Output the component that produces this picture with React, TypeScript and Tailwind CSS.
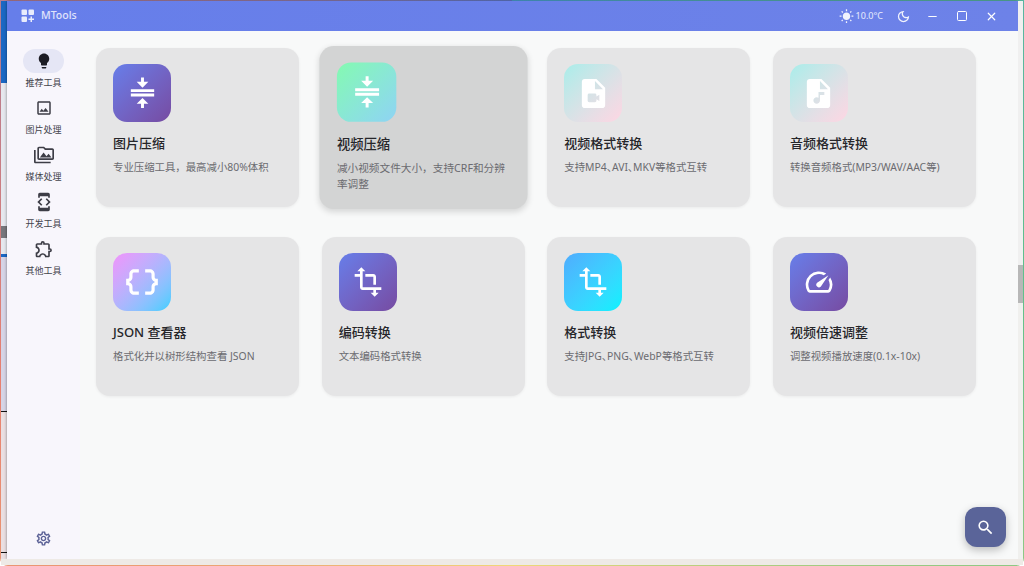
import React from "react";
import {
  MdAudioFile,
  MdCompress,
  MdDataObject,
  MdLightbulb,
  MdOutlineDarkMode,
  MdOutlineDeveloperMode,
  MdOutlineExtension,
  MdOutlineImage,
  MdOutlinePermMedia,
  MdOutlineSettings,
  MdSearch,
  MdSpeed,
  MdTransform,
  MdVideoFile,
  MdWbSunny,
} from "react-icons/md";
import { Minus, Square, X } from "lucide-react";

const navItems = [
  { label: "推荐工具", icon: MdLightbulb, active: true },
  { label: "图片处理", icon: MdOutlineImage },
  { label: "媒体处理", icon: MdOutlinePermMedia },
  { label: "开发工具", icon: MdOutlineDeveloperMode },
  { label: "其他工具", icon: MdOutlineExtension },
];

const purple = "bg-gradient-to-br from-[#667eea] to-[#764ba2]";
const pastel = "bg-gradient-to-br from-[#a8edea] to-[#fed6e3]";

const tools = [
  { title: "图片压缩", desc: "专业压缩工具，最高减小80%体积", icon: MdCompress, size: 35, bg: purple },
  {
    title: "视频压缩",
    desc: "减小视频文件大小，支持CRF和分辨率调整",
    icon: MdCompress,
    size: 35,
    bg: "bg-gradient-to-br from-[#84fab0] to-[#8fd3f4]",
    hovered: true,
  },
  { title: "视频格式转换", desc: "支持MP4、AVI、MKV等格式互转", icon: MdVideoFile, size: 35, bg: pastel, tight: true },
  { title: "音频格式转换", desc: "转换音频格式(MP3/WAV/AAC等)", icon: MdAudioFile, size: 35, bg: pastel },
  {
    title: "JSON 查看器",
    desc: "格式化并以树形结构查看 JSON",
    icon: MdDataObject,
    size: 38,
    bg: "bg-gradient-to-br from-[#f093fb] to-[#30cfff]",
  },
  { title: "编码转换", desc: "文本编码格式转换", icon: MdTransform, size: 32, bg: purple },
  {
    title: "格式转换",
    desc: "支持JPG、PNG、WebP等格式互转",
    icon: MdTransform,
    size: 32,
    bg: "bg-gradient-to-br from-[#4facfe] to-[#00f2fe]",
    tight: true,
  },
  { title: "视频倍速调整", desc: "调整视频播放速度(0.1x-10x)", icon: MdSpeed, size: 32, bg: purple },
];

const Logo = () => (
  <svg width="14" height="14" viewBox="0 0 14 14" fill="white" fillOpacity="0.85">
    <rect x="0.5" y="0.5" width="5.5" height="5.5" rx="1" />
    <rect x="7.5" y="0.5" width="5.5" height="5.5" rx="1" />
    <rect x="0.5" y="7.5" width="5.5" height="5.5" rx="1" />
    <path d="M9.5 7.5h1.5v2h2v1.5h-2v2H9.5v-2h-2V9.5h2z" />
  </svg>
);

const Titlebar = () => (
  <div className="flex h-[30px] shrink-0 items-center bg-gradient-to-r from-[#667eea] to-[#6d82e8] pl-[14px] text-white">
    <Logo />
    <span className="ml-[6px] text-[10.5px] font-medium text-white/80">MTools</span>
    <div className="ml-auto flex items-center">
      <MdWbSunny size={15} className="text-white/90" />
      <span className="ml-[2px] text-[9px] text-white/85">10.0°C</span>
      <MdOutlineDarkMode size={15} className="ml-[13px] text-white/90" />
      <Minus size={13} className="ml-[15px]" strokeWidth={1.8} />
      <Square size={12} className="ml-[17px]" strokeWidth={2} />
      <X size={13} className="ml-[17px] mr-[20px]" strokeWidth={2.2} />
    </div>
  </div>
);

const Sidebar = () => (
  <aside className="flex w-[73px] shrink-0 flex-col items-center bg-[#f8f6fc] pt-[18px] pb-[12px]">
    {navItems.map((item) => {
      const Icon = item.icon;
      return (
        <div key={item.label} className="flex h-[47px] w-full flex-col items-center">
          <div
            className={`flex h-[24px] w-[41px] items-center justify-center rounded-full ${
              item.active ? "bg-[#e5e6f5] text-[#1c1c24]" : "text-[#3d3d46]"
            }`}
          >
            <Icon size={item.active ? 18 : item.label === "图片处理" ? 18 : 20} />
          </div>
          <span className="mt-[4px] text-[9px] leading-[12px] text-[#44444c]">{item.label}</span>
        </div>
      );
    })}
    <MdOutlineSettings size={17} className="mt-auto text-[#5b6196]" />
  </aside>
);

const ToolCard = ({ tool }: { tool: (typeof tools)[number] }) => {
  const Icon = tool.icon;
  return (
    <div
      className={`h-[159px] rounded-[14px] px-[17px] pt-[16px] ${
        tool.hovered
          ? "scale-[1.025] bg-[#d3d4d4] shadow-[0_2px_6px_rgba(0,0,0,0.14)]"
          : "bg-[#e5e5e6] shadow-[0_1px_3px_rgba(0,0,0,0.06)]"
      }`}
    >
      <div className={`flex h-[58px] w-[58px] items-center justify-center rounded-[14px] text-white ${tool.bg}`}>
        <Icon size={tool.size} />
      </div>
      <div className="mt-[12px] text-[13px] leading-[18px] font-medium text-[#26262a]">{tool.title}</div>
      <div
        className={`mt-[7px] text-[10.4px] leading-[16px] text-[#6b6b70] ${
          tool.tight ? "[font-feature-settings:'palt']" : ""
        }`}
      >
        {tool.desc}
      </div>
    </div>
  );
};

export default function App() {
  return (
    <div className="h-[566px] w-[1024px] overflow-hidden bg-white font-['Noto_Sans','Noto_Sans_CJK_SC',sans-serif]">
      {/* screen edge glow, blue on top, green/yellow right, red bottom left */}
      <div className="h-full rounded-b-[8px] bg-[conic-gradient(#4a9fd0,#5fc08a_25%,#f0d878_50%,#e88070_72%,#6078c8)] p-[1px]">
        <div className="flex h-full flex-col rounded-b-[7px] bg-[#f2f2f4]">
          <div className="flex min-h-0 flex-1">
            {/* desktop peeking out on the left */}
            <div className="flex w-[6px] shrink-0 flex-col">
              <div className="h-[82px] bg-[#1b68c4]" />
              <div className="h-[143px] bg-[#e6e8ee]" />
              <div className="h-[12px] bg-[#77777c]" />
              <div className="h-[16px] bg-[#e6e8ee]" />
              <div className="h-[3px] bg-[#1b68c4]" />
              <div className="h-[154px] bg-[#d6d4e6]" />
              <div className="h-[1px] bg-[#111111]" />
              <div className="h-[140px] bg-[#eadfe2]" />
              <div className="h-[1px] bg-[#111111]" />
              <div className="flex-1 bg-[#eadfe2]" />
            </div>

            <div className="flex min-w-0 flex-1 flex-col overflow-hidden shadow-[0_0_3px_rgba(0,0,0,0.45)]">
              <Titlebar />
              <div className="flex min-h-0 flex-1">
                <Sidebar />
                <main className="relative flex-1 bg-[#f8f9f9] pt-[17px] pl-[16px]">
                  <div className="grid w-[880px] grid-cols-4 gap-x-[22.6px] gap-y-[30px]">
                    {tools.map((tool) => (
                      <ToolCard key={tool.title} tool={tool} />
                    ))}
                  </div>
                  <button className="absolute right-[12px] bottom-[12px] flex h-[40px] w-[41px] items-center justify-center rounded-[12px] bg-[#5a6499] text-white shadow-[0_3px_8px_rgba(0,0,0,0.25)]">
                    <MdSearch size={19} />
                  </button>
                </main>
              </div>
            </div>

            <div className="flex w-[5px] shrink-0 flex-col">
              <div className="h-[264px] bg-[#f0f0f0]" />
              <div className="h-[38px] bg-[#b8b8b8]" />
              <div className="flex-1 bg-[#f0f0ee]" />
            </div>
          </div>
          <div className="h-[6px] shrink-0 bg-[#eeeae6]" />
        </div>
      </div>
    </div>
  );
}
